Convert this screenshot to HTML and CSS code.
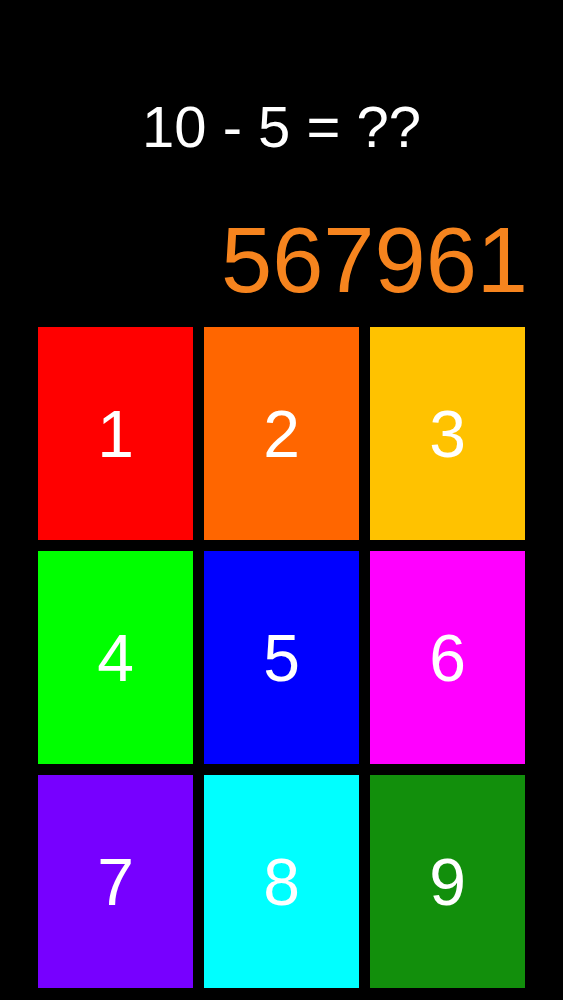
FILE: index.html
```html
<!DOCTYPE html>
<html lang="en">

<head>
    <meta charset="UTF-8">
    <meta name="viewport" content="width=device-width, initial-scale=1.0">
    <title>Math Pad</title>
    <link rel="stylesheet" href="styles.css">
</head>

<body>
    <div class="screen">
        <!-- question -->
        <div class="question">10 - 5 = ??</div>
        <!-- score -->
        <div class="score">567961</div>
        <!-- keypad -->
        <div class="pad">
            <div class="key key-1">1</div>
            <div class="key key-2">2</div>
            <div class="key key-3">3</div>
            <div class="key key-4">4</div>
            <div class="key key-5">5</div>
            <div class="key key-6">6</div>
            <div class="key key-7">7</div>
            <div class="key key-8">8</div>
            <div class="key key-9">9</div>
        </div>
    </div>
</body>

</html>
```

FILE: styles.css
```css
* {
    padding: 0;
    margin: 0;
    box-sizing: border-box;
}

html,
body {
    background: #000;
    height: 100%;
}

body {
    font-family: "Liberation Sans", Arial, sans-serif;
    color: #fff;
}

.screen {
    display: flex;
    flex-direction: column;
}

/* question */
.question {
    margin-top: 98px;
    text-align: center;
    font-size: 58px;
    line-height: 58px;
}

/* score */
.score {
    margin-top: 58px;
    padding-right: 35px;
    text-align: right;
    font-size: 92px;
    line-height: 92px;
    color: #f6841e;
}

/* keypad */
.pad {
    margin-top: 21px;
    padding: 0 38px;
    display: grid;
    grid-template-columns: repeat(3, 155px);
    grid-auto-rows: 213px;
    gap: 11px;
}

.key {
    display: flex;
    align-items: center;
    justify-content: center;
    font-size: 66px;
    color: #fff;
}

.key-1 { background-color: #ff0000; }
.key-2 { background-color: #ff6600; }
.key-3 { background-color: #ffc200; }
.key-4 { background-color: #00ff00; }
.key-5 { background-color: #0000ff; }
.key-6 { background-color: #ff00ff; }
.key-7 { background-color: #7700ff; }
.key-8 { background-color: #00ffff; }
.key-9 { background-color: #128f0c; }
```
